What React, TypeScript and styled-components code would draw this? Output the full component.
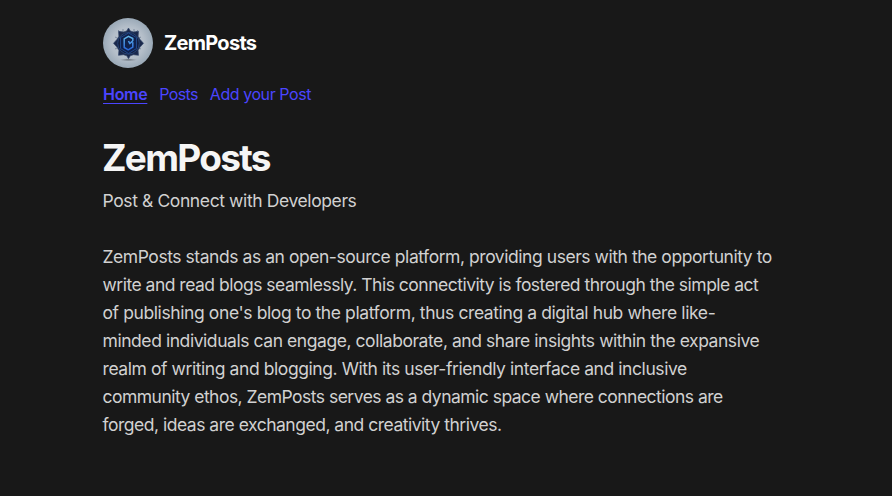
import React from "react";
import styled, { createGlobalStyle } from "styled-components";

const GlobalStyle = createGlobalStyle`
  *, *::before, *::after { box-sizing: border-box; }
  body {
    margin: 0;
    background: #181818;
    font-family: Inter, "Liberation Sans", sans-serif;
  }
`;

const Page = styled.div`
  min-height: 496px;
  padding: 18px 100px 0 103px;
`;

const Brand = styled.div`
  display: flex;
  align-items: center;
  gap: 11px;
`;

const Avatar = styled.svg`
  display: block;
  width: 50px;
  height: 50px;
  flex: none;
`;

const BrandName = styled.span`
  color: #fff;
  font-size: 20px;
  line-height: 28px;
  font-weight: 700;
  letter-spacing: -0.72px;
`;

const Nav = styled.nav`
  display: flex;
  gap: 12px;
  margin-top: 14px;
`;

const NavLink = styled.a<{ $active?: boolean; $tracking: number }>`
  color: #4b45ff;
  font-size: 16px;
  line-height: 24px;
  font-weight: ${(p) => (p.$active ? 600 : 400)};
  letter-spacing: ${(p) => p.$tracking}px;
  text-decoration: ${(p) => (p.$active ? "underline" : "none")};
  text-decoration-thickness: 1px;
  text-underline-offset: 3px;
`;

const Title = styled.h1`
  margin: 32px 0 0 -1px;
  color: #f5f5f5;
  font-size: 37px;
  line-height: 40px;
  font-weight: 700;
  letter-spacing: -1.7px;
`;

const Subtitle = styled.p`
  margin: 9px 0 0 -0.5px;
  color: #d1d1d1;
  font-size: 17.5px;
  line-height: 28px;
  letter-spacing: -0.39px;
`;

const Intro = styled.p`
  margin: 28px 0 0 -0.5px;
  color: #d1d1d1;
  font-size: 17.5px;
  line-height: 28px;
`;

const Line = styled.span<{ $tracking: number }>`
  display: block;
  white-space: nowrap;
  letter-spacing: ${(p) => p.$tracking}px;
`;

const lines: [string, number][] = [
  ["ZemPosts stands as an open-source platform, providing users with the opportunity to", -0.447],
  ["write and read blogs seamlessly. This connectivity is fostered through the simple act", -0.503],
  ["of publishing one's blog to the platform, thus creating a digital hub where like-", -0.4],
  ["minded individuals can engage, collaborate, and share insights within the expansive", -0.438],
  ["realm of writing and blogging. With its user-friendly interface and inclusive", -0.422],
  ["community ethos, ZemPosts serves as a dynamic space where connections are", -0.52],
  ["forged, ideas are exchanged, and creativity thrives.", -0.488],
];

const Logo = () => (
  <Avatar viewBox="0 0 50 50" role="img" aria-label="ZemPosts logo">
    <defs>
      <radialGradient id="disc">
        <stop offset="0" stopColor="#c9ced6" />
        <stop offset="0.65" stopColor="#b4bec9" />
        <stop offset="1" stopColor="#9aa9b7" />
      </radialGradient>
      <radialGradient id="shadow">
        <stop offset="0" stopColor="#4b5057" stopOpacity="0.8" />
        <stop offset="1" stopColor="#777f88" stopOpacity="0" />
      </radialGradient>
      <linearGradient id="glow" x1="0" y1="0" x2="0" y2="1">
        <stop offset="0" stopColor="#62b7e8" />
        <stop offset="1" stopColor="#2866d8" />
      </linearGradient>
    </defs>
    <circle cx="25" cy="25" r="25" fill="url(#disc)" />
    <ellipse cx="25.5" cy="41.8" rx="9" ry="1.6" fill="url(#shadow)" />
    <path
      d="M15 12l2 2M35 12l-2 2M12 19l2 1M38 19l-2 1M12 31l2-1M38 31l-2-1M20 11v3M31 11v3"
      stroke="#65758d"
      strokeWidth="0.7"
    />
    <path
      d="M25.5 10l1.8 3 3.2 1 5-.7-.4 5 1.8 3 3.6 4-3.6 4-1.8 3.2.4 4.8-5-.6-3.2 1-1.8 3-1.8-3-3.2-1-5 .6.4-4.8-1.8-3.2-3.6-4 3.6-4 1.8-3-.4-5 5 .7 3.2-1z"
      fill="#1a284b"
      stroke="#34476c"
      strokeWidth="0.7"
    />
    <circle cx="25.5" cy="25.3" r="10.8" fill="#131f40" stroke="#2b4b80" strokeWidth="0.8" />
    <path d="M25.5 15l8 4.5v11l-8 5-8-5v-11z" fill="#10214c" stroke="#234c92" strokeWidth="0.9" />
    <path
      d="M25.5 23l1.3 2.6 3-2.8v-2.3L25.5 18.300l-4.300 2.500v8.700l4 2.300 4.600-2.600v-5"
      fill="none"
      stroke="url(#glow)"
      strokeWidth="1.5"
      strokeLinejoin="round"
    />
  </Avatar>
);

export default function App() {
  return (
    <>
      <GlobalStyle />
      <Page>
        <header>
          <Brand>
            <Logo />
            <BrandName>ZemPosts</BrandName>
          </Brand>
          <Nav>
            <NavLink $active $tracking={-0.3}>Home</NavLink>
            <NavLink $tracking={-0.65}>Posts</NavLink>
            <NavLink $tracking={-0.43}>Add your Post</NavLink>
          </Nav>
        </header>
        <main>
          <Title>ZemPosts</Title>
          <Subtitle>Post &amp; Connect with Developers</Subtitle>
          <Intro>
            {lines.map(([text, tracking]) => (
              <Line key={text} $tracking={tracking}>{text}</Line>
            ))}
          </Intro>
        </main>
      </Page>
    </>
  );
}
